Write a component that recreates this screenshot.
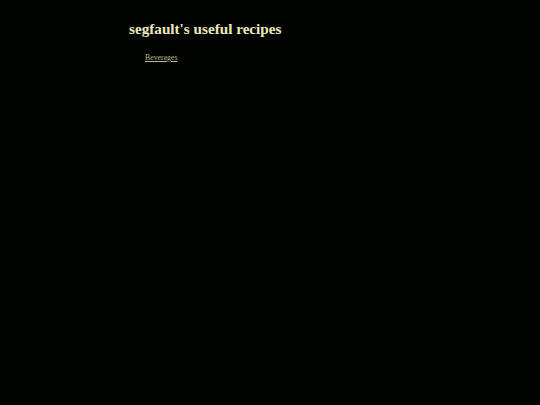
export default function App() {
  return (
    <div className="min-h-[405px] bg-[#010401] font-['Liberation_Serif',serif] text-[#ece8bc]">
      <div className="pl-[129px] pt-[18px]">
        <h1 className="text-[15.2px] font-bold leading-[22px]">segfault's useful recipes</h1>
        <ul className="mt-[13px] pl-[16px]">
          <li className="text-[7.8px] leading-[10px]">
            <a href="#" className="text-[#bcb894] underline">Beverages</a>
          </li>
        </ul>
      </div>
    </div>
  );
}
